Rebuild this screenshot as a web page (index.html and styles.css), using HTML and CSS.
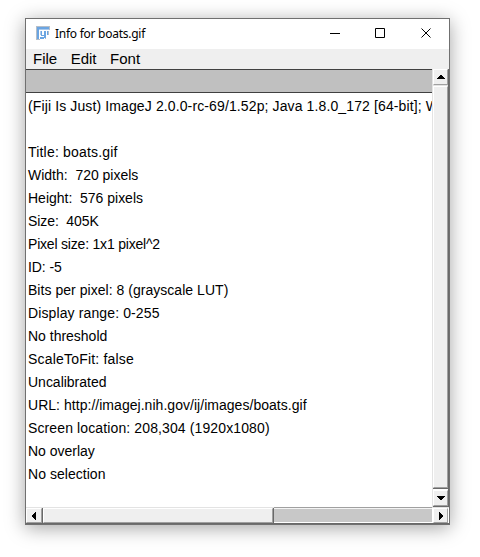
FILE: index.html
```html
<!DOCTYPE html>
<html lang="en">
<head>
<meta charset="utf-8">
<title>Info for boats.gif</title>
<link rel="stylesheet" href="styles.css">
</head>
<body>
<main class="window">
  <header class="titlebar">
    <svg class="logo" width="14" height="14" viewBox="0 0 14 14" shape-rendering="crispEdges">
      <path fill="#b5bec8" d="M0 0h14v4h-1V1H1v12h3v1H0zM12 5h1v4h-1zM9 12h1v1H9z"/>
      <path fill="#6ba5e2" d="M1 1h12v2H3v10H1zM5 5h1v4h2V5h2v7H8v1H4v-2h4v-1H5zM11 5h1v4h-1z"/>
      <path fill="#a9c9ed" d="M3 3h10v1H3zM4 5h1v4H4z"/>
    </svg>
    <h1 class="title">Info for boats.gif</h1>
    <svg class="controls" width="103" height="12" viewBox="0 0 103 12" fill="none" stroke="#000">
      <path d="M0 5.500h10M45.500 .5h9v9h-9z"/>
      <path d="M91.500 .5l9 9M100.500 .5l-9 9"/>
    </svg>
  </header>
  <nav class="menubar"><span>File</span><span>Edit</span><span>Font</span></nav>
  <div class="content">
    <section class="panel">
      <div class="heading"></div>
      <div class="text">
        <p class="wide">(Fiji Is Just) ImageJ 2.0.0-rc-69/1.52p; Java 1.8.0_172 [64-bit]; W</p>
        <p></p>
        <p class="wider">Title: boats.gif</p>
        <p>Width:&nbsp; 720 pixels</p>
        <p>Height:&nbsp; 576 pixels</p>
        <p class="tight">Size:&nbsp; 405K</p>
        <p class="tighter">Pixel size: 1x1 pixel^2</p>
        <p class="tight">ID: -5</p>
        <p class="normal">Bits per pixel: 8 (grayscale LUT)</p>
        <p class="wide">Display range: 0-255</p>
        <p>No threshold</p>
        <p class="wider">ScaleToFit: false</p>
        <p>Uncalibrated</p>
        <p class="normal">URL: http://imagej.nih.gov/ij/images/boats.gif</p>
        <p class="wide">Screen location: 208,304 (1920x1080)</p>
        <p>No overlay</p>
        <p class="normal">No selection</p>
      </div>
    </section>
    <aside class="vscroll">
      <div class="button up"><svg width="8" height="4" viewBox="0 0 8 4" shape-rendering="crispEdges"><path d="M3 0h2v1h1v1h1v1h1v1H0V3h1V2h1V1h1z"/></svg></div>
      <div class="vthumb"></div>
      <div class="button down"><svg width="8" height="4" viewBox="0 0 8 4" shape-rendering="crispEdges"><path d="M0 0h8v1H7v1H6v1H5v1H3V3H2V2H1V1H0z"/></svg></div>
    </aside>
  </div>
  <footer class="hscroll">
    <div class="button left"><svg width="4" height="8" viewBox="0 0 4 8" shape-rendering="crispEdges"><path d="M4 0v8H3V7H2V6H1V5H0V3h1V2h1V1h1V0z"/></svg></div>
    <div class="hthumb"></div>
    <div class="track"></div>
    <div class="button right"><svg width="4" height="8" viewBox="0 0 4 8" shape-rendering="crispEdges"><path d="M0 0h1v1h1v1h1v1h1v2H3v1H2v1H1v1H0z"/></svg></div>
  </footer>
</main>
</body>
</html>
```
FILE: styles.css
```css
* { box-sizing: border-box; }
body {
  margin: 0;
  width: 480px;
  height: 557px;
  padding: 18px 0 0 25px;
  overflow: hidden;
  background: #fff;
  color: #000;
  font-family: "Liberation Sans", Arial, sans-serif;
}
.window {
  display: flex;
  flex-direction: column;
  width: 425px;
  height: 507px;
  border: 1px solid #707070;
  background: #fff;
  box-shadow: 0 3px 18px rgba(0, 0, 0, .36);
}
.titlebar {
  display: flex;
  align-items: flex-start;
  height: 30px;
  flex: none;
  padding-left: 10px;
}
.logo { margin-top: 7px; }
.title {
  margin: 6px 0 0 5px;
  font: 12px/18px "Noto Sans", "Open Sans", sans-serif;
  letter-spacing: -.26px;
  white-space: nowrap;
}
.controls { margin: 9px 16px 0 auto; }
.menubar {
  display: flex;
  gap: 13.500px;
  height: 20px;
  flex: none;
  padding-left: 7px;
  background: #efefef;
  font-size: 15px;
  line-height: 20px;
}
.content { display: flex; height: 438px; flex: none; }
.panel { width: 406px; overflow: hidden; }
.heading {
  height: 24px;
  background: #c0c0c0;
  border-top: 1px solid #404040;
  border-bottom: 1px solid #404040;
}
.text { padding: 2px 0 0 2px; }
.text p {
  margin: 0;
  height: 23px;
  font-size: 14px;
  line-height: 23px;
  letter-spacing: -.01px;
  white-space: pre;
}
.text .tighter { letter-spacing: -.2px; }
.text .tight { letter-spacing: -.08px; }
.text .normal { letter-spacing: .035px; }
.text .wide { letter-spacing: .12px; }
.text .wider { letter-spacing: .19px; }
.vscroll {
  width: 17px;
  display: flex;
  flex-direction: column;
  border-left: 1px solid #e3e3e3;
  border-right: 1px solid #696969;
}
.button {
  display: flex;
  align-items: center;
  justify-content: center;
  flex: none;
  background: #efefef;
  border: 1px solid #fff;
  border-right-color: #a0a0a0;
  border-bottom-color: #a0a0a0;
}
.up { height: 16px; box-shadow: 0 1px #e3e3e3; }
.vthumb {
  flex: 1;
  margin-top: 1px;
  background: #efefef;
  border: 1px solid #fff;
  border-right-color: #a0a0a0;
  border-bottom-color: #a0a0a0;
  box-shadow: 0 1px #696969;
}
.down { height: 16px; margin: 2px 0 1px; box-shadow: 0 1px #696969; }
.hscroll {
  display: flex;
  height: 17px;
  flex: none;
  border-top: 1px solid #e3e3e3;
  border-bottom: 1px solid #696969;
}
.left { width: 16px; margin-right: 1px; box-shadow: 1px 0 #696969; }
.hthumb {
  width: 230px;
  background: #efefef;
  border: 1px solid #fff;
  border-right-color: #a0a0a0;
  border-bottom-color: #a0a0a0;
  box-shadow: 1px 0 #696969;
}
.track {
  width: 158px;
  margin: -1px 0 0 1px;
  background: #c8c8c8;
  border-top: 1px solid #a0a0a0;
  border-bottom: 1px solid #fff;
  box-shadow: inset 0 1px #f4f4f4;
}
.right { width: 15px; margin-left: 1px; }
```
